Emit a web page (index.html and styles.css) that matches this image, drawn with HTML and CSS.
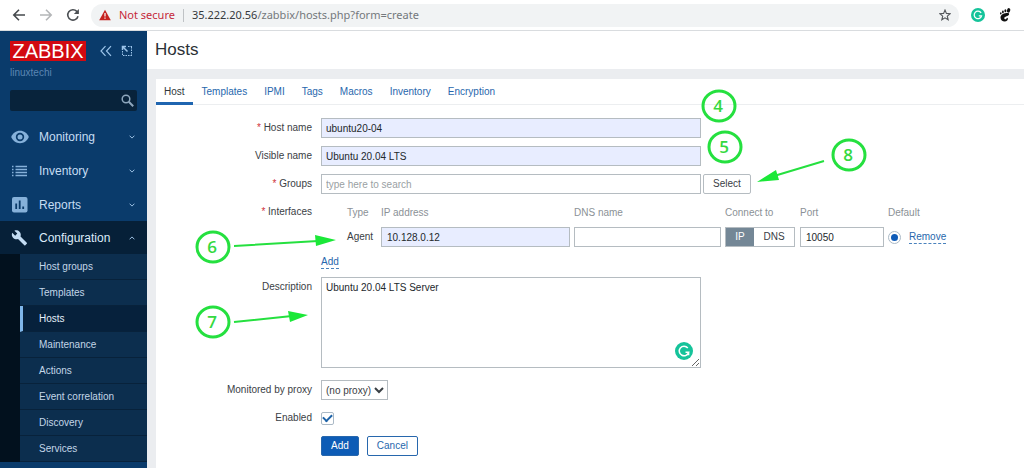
FILE: index.html
```html
<!DOCTYPE html>
<html lang="en">
<head>
<meta charset="utf-8">
<title>Hosts</title>
<link rel="stylesheet" href="styles.css">
</head>
<body>
<div class="toolbar">
  <button class="nav-btn" type="button" aria-label="Back"><svg width="14" height="14" viewBox="0 0 14 14" fill="none" stroke="#45494d" stroke-width="1.6"><path d="M13 7H2M7 1.8 1.8 7 7 12.2"/></svg></button>
  <button class="nav-btn" type="button" aria-label="Forward"><svg width="14" height="14" viewBox="0 0 14 14" fill="none" stroke="#b4b6b8" stroke-width="1.6"><path d="M1 7h11M7 1.8 12.2 7 7 12.2"/></svg></button>
  <button class="nav-btn" type="button" aria-label="Reload"><svg width="14" height="14" viewBox="0 0 14 14" fill="none" stroke="#4b4f53" stroke-width="1.6"><path d="M12 8.2A5.2 5.2 0 1 1 10.8 3.4L12 4.6"/><path d="M12.9 1v5H7.9z" fill="#4b4f53" stroke="none"/></svg></button>
  <div class="address">
    <svg width="12" height="12" viewBox="0 0 12 12"><path d="M6 .8 11.8 11.2H.2z" fill="#c5221f"/><path d="M6 4v3.6M6 8.5v1.3" stroke="#fff" stroke-width="1.2"/></svg>
    <span class="insecure">Not secure</span>
    <span class="address-sep"></span>
    <span class="url"><span class="url-host">35.222.20.56</span>/zabbix/hosts.php?form=create</span>
    <button class="star" type="button" aria-label="Bookmark"><svg width="12" height="12" viewBox="0 0 12 12" fill="none" stroke="#55585c" stroke-width="1.1"><path d="M6 1 7.4 4.4 11.2 4.7 8.3 7.1 9.2 10.8 6 8.8 2.8 10.8 3.7 7.1.8 4.7 4.6 4.4z"/></svg></button>
  </div>
  <svg class="ext" width="14" height="14" viewBox="0 0 18 18"><circle cx="9" cy="9" r="9" fill="#15c39a"/><path d="M13 6.4A4.8 4.8 0 1 0 13.6 10H10" fill="none" stroke="#fff" stroke-width="1.6"/></svg>
  <svg class="ext" width="12" height="14" viewBox="0 0 12 14" fill="#111"><path d="M8.6 5C5.500 5 1.500 6.400 1.500 9.500 1.500 12 3.600 13.600 5.600 13.600 7.800 13.600 9.200 12.100 8.900 10.600 8.700 9.600 7.700 9.600 7.500 10.400 7.200 11.600 5.400 11.700 5.300 10.200 5.200 8.300 9.700 8.600 10.100 6.300 10.200 5.500 9.600 5 8.600 5z"/><ellipse cx="9.600" cy="2.400" rx="1.600" ry="2.300" transform="rotate(15 9.600 2.400)"/><ellipse cx="6.400" cy="2.700" rx="1" ry="1.500"/><ellipse cx="3.900" cy="3.900" rx=".9" ry="1.300"/><ellipse cx="1.800" cy="5.400" rx=".8" ry="1.100"/></svg>
</div>

<div class="app">
  <aside class="sidebar">
    <div class="brand">
      <a class="logo" href="#">ZABBIX</a>
      <button class="side-btn" type="button" aria-label="Collapse sidebar"><svg width="12" height="12" viewBox="0 0 12 12" fill="none" stroke="#9cc4ea" stroke-width="1.2"><path d="M5.500 1.200 1 6l4.500 4.800M11 1.200 6.500 6l4.500 4.800"/></svg></button>
      <button class="side-btn" type="button" aria-label="Hide sidebar"><svg width="12" height="12" viewBox="0 0 12 12" fill="none" stroke="#9cc4ea"><path d="M7 1.500h4.500M10.500 2v9M11 10.500H1M1.500 10V6" stroke-dasharray="1.500 1"/><path d="M1.500 5V1.500H5M2 2l4.500 4.500" stroke-width="1.500"/></svg></button>
    </div>
    <div class="server">linuxtechi</div>
    <form class="search">
      <input class="search-input" type="text" aria-label="Search">
      <button class="search-btn" type="button" aria-label="Search"><svg width="13" height="13" viewBox="0 0 13 13" fill="none" stroke="#8ea7bd"><circle cx="5" cy="5" r="3.800" stroke-width="1.500"/><path d="m7.800 7.800 4.400 4.400" stroke-width="2"/></svg></button>
    </form>
    <nav class="menu">
      <button class="menu-item" type="button"><svg width="18" height="14" viewBox="0 0 18 14"><path d="M9 .8C5 .8 1.600 3.300.2 7c1.400 3.700 4.800 6.200 8.800 6.200s7.400-2.500 8.800-6.200C16.400 3.300 13 .8 9 .8z" fill="#86b1da"/><circle cx="9" cy="7" r="4.200" fill="#0a3a69"/><circle cx="9" cy="7" r="2.500" fill="#86b1da"/></svg><span class="menu-text">Monitoring</span><svg class="chev" width="6" height="4" viewBox="0 0 6 4"><path d="m.6.7 2.400 2.400L5.400.7"/></svg></button>
      <button class="menu-item" type="button"><svg width="18" height="12" viewBox="0 0 18 12" stroke="#86b1da" stroke-width="1.300"><path d="M1 1.500h1.500M1 4.500h1.500M1 7.500h1.500M1 10.500h1.500M4.500 1.500H16M4.500 4.500H16M4.500 7.500H16M4.500 10.500H16"/></svg><span class="menu-text">Inventory</span><svg class="chev" width="6" height="4" viewBox="0 0 6 4"><path d="m.6.7 2.400 2.400L5.400.7"/></svg></button>
      <button class="menu-item" type="button"><svg width="18" height="16" viewBox="0 0 18 16"><rect x="1" width="15.500" height="15.500" rx="2" fill="#86b1da"/><path d="M5.200 6.500v5.500M8.700 3.500V12M12.200 9.500V12" stroke="#0a3a69" stroke-width="1.800"/></svg><span class="menu-text">Reports</span><svg class="chev" width="6" height="4" viewBox="0 0 6 4"><path d="m.6.7 2.400 2.400L5.400.7"/></svg></button>
      <button class="menu-item menu-open" type="button"><svg width="18" height="16" viewBox="0 0 18 16"><path d="M15.800 12.800 9.500 6.500C10.100 4.900 9.800 3 8.500 1.700 7.100.3 5.100 0 3.400.7l2.900 2.900-2.100 2.100L1.200 2.800C.5 4.500.8 6.500 2.200 7.900c1.300 1.300 3.200 1.600 4.800 1l6.300 6.300c.3.300.7.300 1 0l1.500-1.400c.3-.3.300-.8 0-1z" fill="#c3dcf3"/></svg><span class="menu-text">Configuration</span><svg class="chev" width="6" height="4" viewBox="0 0 6 4"><path d="M.6 3.300 3 .9l2.400 2.400"/></svg></button>
      <ul class="submenu">
        <li><a href="#">Host groups</a></li>
        <li><a href="#">Templates</a></li>
        <li><a class="current" href="#">Hosts</a></li>
        <li><a href="#">Maintenance</a></li>
        <li><a href="#">Actions</a></li>
        <li><a href="#">Event correlation</a></li>
        <li><a href="#">Discovery</a></li>
        <li><a href="#">Services</a></li>
      </ul>
    </nav>
  </aside>

  <main class="main">
    <header class="page-head"><h1>Hosts</h1></header>
    <section class="panel">
      <nav class="tabs">
        <a class="tab tab-on" href="#">Host</a>
        <a class="tab" href="#">Templates</a>
        <a class="tab" href="#">IPMI</a>
        <a class="tab" href="#">Tags</a>
        <a class="tab" href="#">Macros</a>
        <a class="tab" href="#">Inventory</a>
        <a class="tab" href="#">Encryption</a>
      </nav>
      <form class="form">
        <label class="req" for="host">Host name</label>
        <div><input class="field wide filled" id="host" type="text" value="ubuntu20-04"></div>

        <label for="visible">Visible name</label>
        <div><input class="field wide filled" id="visible" type="text" value="Ubuntu 20.04 LTS"></div>

        <label class="req" for="groups">Groups</label>
        <div class="inline"><input class="field wide" id="groups" type="text" placeholder="type here to search"><button class="btn-select" type="button">Select</button></div>

        <span class="label req">Interfaces</span>
        <div class="interfaces">
          <table>
            <thead>
              <tr><th class="c-type">Type</th><th class="c-ip">IP address</th><th class="c-dns">DNS name</th><th class="c-conn">Connect to</th><th class="c-port">Port</th><th colspan="2">Default</th></tr>
            </thead>
            <tbody>
              <tr>
                <td class="c-type">Agent</td>
                <td><input class="field filled" type="text" value="10.128.0.12" aria-label="IP address"></td>
                <td><input class="field" type="text" aria-label="DNS name"></td>
                <td><div class="segment"><button class="seg seg-on" type="button">IP</button><button class="seg" type="button">DNS</button></div></td>
                <td><input class="field" type="text" value="10050" aria-label="Port"></td>
                <td class="c-radio"><input class="radio" type="radio" name="default" checked aria-label="Default"></td>
                <td><a class="dotted" href="#">Remove</a></td>
              </tr>
            </tbody>
          </table>
          <a class="dotted" href="#">Add</a>
        </div>

        <label for="description">Description</label>
        <div class="area-wrap"><textarea class="area" id="description" spellcheck="false">Ubuntu 20.04 LTS Server</textarea><svg class="area-badge" width="18" height="18" viewBox="0 0 18 18"><circle cx="9" cy="9" r="9" fill="#15c39a"/><path d="M12.800 6A4.800 4.800 0 1 0 13.700 10.200H10.500M13.600 9.800v3.400" fill="none" stroke="#fff" stroke-width="1.500"/></svg></div>

        <label for="proxy">Monitored by proxy</label>
        <div><select class="select" id="proxy"><option>(no proxy)</option></select></div>

        <label for="enabled">Enabled</label>
        <div class="inline check-row"><input class="check" id="enabled" type="checkbox" checked></div>

        <div class="actions"><button class="btn primary" type="button">Add</button><button class="btn" type="button">Cancel</button></div>
      </form>
    </section>
  </main>
</div>

<svg class="notes" width="1024" height="468" viewBox="0 0 1024 468">
  <g class="note-ring">
    <ellipse cx="719" cy="106" rx="16" ry="15"/>
    <ellipse cx="725" cy="147" rx="16" ry="15"/>
    <ellipse cx="849" cy="155" rx="16" ry="15"/>
    <ellipse cx="213" cy="247" rx="16" ry="15"/>
    <ellipse cx="213" cy="322" rx="16" ry="15"/>
  </g>
  <path class="note-line" d="M824 161 774 176M234 246 318 241M234 322 292 316"/>
  <path class="note-head" d="M757 182 776 170 779 180zM336 240 315 235 316 246zM308 315 288 311 290 322z"/>
  <g class="note-num">
    <text x="718" y="112">4</text>
    <text x="724" y="153">5</text>
    <text x="848" y="161">8</text>
    <text x="212" y="253">6</text>
    <text x="212" y="328">7</text>
  </g>
</svg>
</body>
</html>
```

FILE: styles.css
```css
* { box-sizing: border-box; }
body {
  margin: 0;
  min-height: 100vh;
  display: flex;
  flex-direction: column;
  position: relative;
  font: 10px/14px "Liberation Sans", Arial, sans-serif;
  color: #3a4045;
  background: #ebedf0;
}
button, input, select, textarea { font: inherit; color: inherit; margin: 0; }
button { padding: 0; border: 0; background: none; display: flex; align-items: center; justify-content: center; }
a { color: #2767ad; text-decoration: none; }
svg { flex: none; }

/* Browser toolbar */
.toolbar {
  height: 31px;
  display: flex;
  align-items: center;
  padding: 0 12px;
  background: #fff;
  border-bottom: 1px solid #d9dcdf;
}
.nav-btn { width: 14px; margin-right: 13px; }
.address {
  flex: 1;
  height: 23px;
  display: flex;
  align-items: center;
  padding: 0 8px;
  margin-right: 12px;
  border-radius: 12px;
  background: #f1f3f4;
  font: 11px/16px "Noto Sans", sans-serif;
}
.nav-btn + .address { margin-left: -2px; }
.insecure { color: #c5283a; margin-left: 8px; }
.address-sep { width: 1px; height: 13px; margin: 0 8px; background: #bfc2c5; }
.url { color: #74787c; }
.url-host { color: #36393c; }
.star { margin-left: auto; }
.ext { margin-right: 14px; }
.ext:last-child { margin-right: 1px; }

.app { flex: 1; display: flex; }

/* Sidebar */
.sidebar { width: 147px; flex: none; background: #0a3b6b; }
.brand { display: flex; align-items: center; padding: 10px 14px 0 10px; }
.logo {
  width: 76px;
  background: #d20a11;
  color: #fff;
  font-size: 20px;
  line-height: 20px;
  text-align: center;
  margin-right: 14px;
}
.side-btn + .side-btn { margin-left: 9px; }
.server { padding: 5px 10px 0; color: #5b86b3; }
.search {
  display: flex;
  height: 21px;
  margin: 10px 10px 8px;
  border-radius: 2px;
  background: #08233b;
}
.search-input { flex: 1; min-width: 0; border: 0; background: none; color: #fff; padding: 0 5px; }
.search-btn { width: 20px; }
.menu-item {
  width: 100%;
  height: 34px;
  padding: 1px 12px 0 11px;
  font-size: 12px;
  color: #c6ddf3;
}
.menu-text { flex: 1; margin-left: 10px; text-align: left; }
.menu-open { height: 33px; background: #062038; color: #dcebf8; }
.chev { fill: none; stroke: #9cc0e2; stroke-width: 1; }
.submenu { list-style: none; margin: 0; padding: 0 0 0 20px; background: #02111e; }
.submenu a {
  display: block;
  height: 26px;
  line-height: 26px;
  padding-left: 19px;
  background: #0c2e4e;
  border-bottom: 1px solid #08223b;
  color: #c3d6e8;
}
.submenu .current {
  padding-left: 16px;
  border-left: 3px solid #7fb6ea;
  background: #06213c;
  color: #e4eff9;
}

/* Main column */
.main { flex: 1; min-width: 0; display: flex; flex-direction: column; }
.page-head { padding: 9px 8px; background: #fff; }
h1 { margin: 0; font-size: 17px; line-height: 20px; font-weight: 400; color: #2b3136; }
.panel { flex: 1; margin: 10px 0 0 9px; background: #fff; }
.tabs { display: flex; height: 26px; border-bottom: 1px solid #eceef0; }
.tab { padding: 6px 8px 0; line-height: 14px; }
.tab + .tab { margin-left: 1px; }
.tab-on { color: #30363b; border-bottom: 3px solid #1f65b0; margin-bottom: -1px; }

/* Form */
.form {
  display: grid;
  grid-template-columns: 156px minmax(0, 1fr);
  column-gap: 9px;
  row-gap: 8px;
  padding: 13px 0 10px;
}
.form > label, .label { text-align: right; line-height: 20px; }
.form > div { min-width: 0; }
.req::before { content: "* "; color: #d0323a; }
.field {
  display: block;
  width: 100%;
  height: 20px;
  padding: 0 5px;
  border: 1px solid #b5bcc1;
  background: #fff;
  color: #23282c;
}
.field::placeholder { color: #9a9fa3; opacity: 1; }
.wide { width: 380px; max-width: 100%; padding: 0 4px; }
.filled { background: #e8edff; }
.inline { display: flex; align-items: center; }
.btn-select {
  width: 48px;
  height: 20px;
  margin-left: 2px;
  border: 1px solid #b5bcc1;
  border-radius: 2px;
}
table { border-collapse: collapse; table-layout: fixed; margin-bottom: 8px; }
th, td { padding: 0 4px 0 0; text-align: left; font-weight: 400; }
th { height: 25px; padding-bottom: 4px; color: #8b9196; }
.c-type { width: 60px; padding: 0 0 0 26px; }
th.c-type { padding-bottom: 4px; }
.c-ip { width: 193px; }
.c-dns { width: 151px; }
.c-conn { width: 75px; }
.c-port { width: 88px; }
.c-radio { width: 21px; }
.segment { display: flex; width: 70px; height: 20px; border: 1px solid #b5bcc1; }
.seg { flex: 1; }
.seg-on { flex: none; width: 28px; background: #748796; color: #fff; }
.radio, .check {
  appearance: none;
  display: flex;
  align-items: center;
  justify-content: center;
  width: 13px;
  height: 13px;
  border: 1px solid #aab9c6;
  background: #fff;
}
.radio { border-radius: 50%; }
.radio:checked::before { content: ""; width: 7px; height: 7px; border-radius: 50%; background: #0f5cb8; }
.check { border-radius: 2px; }
.check:checked::before {
  content: "";
  width: 7px;
  height: 4px;
  margin-bottom: 2px;
  border: solid #1c62a8;
  border-width: 0 0 2px 2px;
  transform: rotate(-45deg);
}
.check-row { height: 20px; }
.dotted { display: inline-block; line-height: 12px; border-bottom: 1px dashed #4a82bd; }
.area-wrap { position: relative; width: 380px; max-width: 100%; }
.area {
  display: block;
  width: 100%;
  height: 91px;
  padding: 3px 4px;
  border: 1px solid #b5bcc1;
  background: #fff;
  color: #23282c;
}
.area-badge { position: absolute; right: 8px; bottom: 8px; }
.form > label[for="proxy"], .form > label[for="proxy"] + div { margin-top: 4px; }
.select {
  display: block;
  width: 67px;
  height: 20px;
  padding: 0;
  border: 1px solid #b5bcc1;
  background: #fff;
}
.actions { grid-column: 2; display: flex; gap: 8px; }
.btn { height: 20px; padding: 0 9px; border: 1px solid #2767ad; border-radius: 2px; color: #2767ad; }
.primary { background: #0d5cb6; color: #fff; }

/* Numbered callouts */
.notes { position: absolute; top: 0; left: 0; pointer-events: none; }
.note-ring { fill: none; stroke: #25e03f; stroke-width: 3; }
.note-line { fill: none; stroke: #25e03f; stroke-width: 2; }
.note-head { fill: #1be838; }
.note-num { fill: #35d93f; font: 600 17px "Open Sans", sans-serif; text-anchor: middle; }
```
